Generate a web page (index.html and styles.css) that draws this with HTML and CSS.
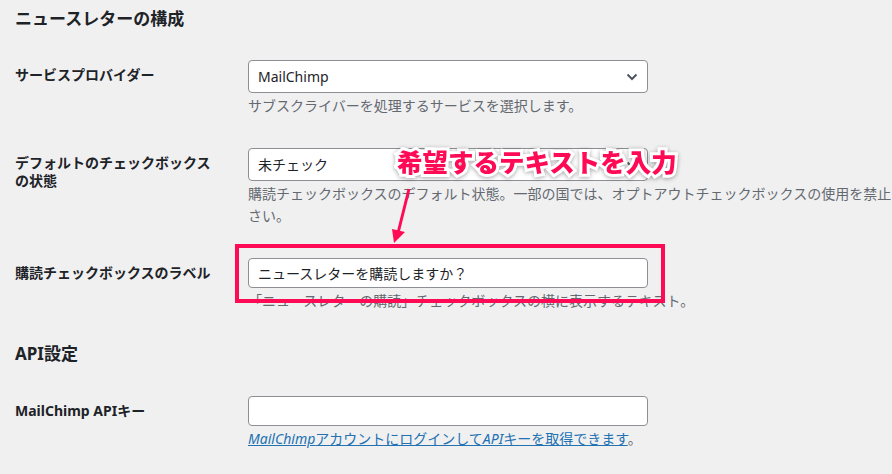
FILE: index.html
```html
<!DOCTYPE html>
<html lang="ja">
<head>
	<meta charset="UTF-8" />
	<meta name="viewport" content="width=device-width, initial-scale=1.0" />
	<title>ニュースレターの構成</title>
	<link rel="stylesheet" href="styles.css">
</head>
<body>
<div class="page">
	<h2>ニュースレターの構成</h2>

	<div class="row">
		<label class="label">サービスプロバイダー</label>
		<div class="field">
			<div class="select">
				<span>MailChimp</span>
				<svg width="12" height="8" viewBox="0 0 12 8"><path d="M1.5 1.5 6 6l4.5-4.5" fill="none" stroke="#50575e" stroke-width="2"/></svg>
			</div>
			<p class="desc">サブスクライバーを処理するサービスを選択します。</p>
		</div>
	</div>

	<div class="row">
		<label class="label">デフォルトのチェックボックス<br>の状態</label>
		<div class="field">
			<div class="select">
				<span>未チェック</span>
				<svg width="12" height="8" viewBox="0 0 12 8"><path d="M1.5 1.5 6 6l4.5-4.5" fill="none" stroke="#50575e" stroke-width="2"/></svg>
			</div>
			<p class="desc nowrap">購読チェックボックスのデフォルト状態。一部の国では、オプトアウトチェックボックスの使用を禁止<br>さい。</p>
		</div>
	</div>

	<div class="row">
		<label class="label">購読チェックボックスのラベル</label>
		<div class="field">
			<div class="highlight-wrap">
				<input class="input" type="text" value="ニュースレターを購読しますか？">
				<div class="highlight"></div>
			</div>
			<p class="desc">「ニュースレターの購読」チェックボックスの横に表示するテキスト。</p>
		</div>
	</div>

	<h2 class="second">API設定</h2>

	<div class="row">
		<label class="label">MailChimp APIキー</label>
		<div class="field">
			<input class="input" type="text" value="">
			<p class="desc"><a href="#"><i>MailChimp</i>アカウントにログインして<i>API</i>キーを取得できます</a>。</p>
		</div>
	</div>

	<div class="note">希望するテキストを入力</div>
	<svg class="arrow" width="30" height="64" viewBox="0 0 30 64">
		<line x1="21" y1="4" x2="10" y2="48" stroke="#fe0a55" stroke-width="3"/>
		<polygon points="4,44 17,47 6,58" fill="#fe0a55"/>
	</svg>
</div>
</body>
</html>
```

FILE: styles.css
```css
* {
	box-sizing: border-box;
	margin: 0;
	padding: 0;
}
html, body {
	width: 100%;
	height: 100%;
	overflow: hidden;
}
body {
	background: #f0f0f1;
	color: #1d2327;
	font-family: "Noto Sans", "Noto Sans CJK JP", sans-serif;
	font-size: 14px;
}
.page {
	position: relative;
	padding-left: 15px;
}
h2 {
	font-size: 17px;
	font-weight: 700;
	line-height: 22px;
	margin-top: 8px;
	margin-bottom: 14px;
}
h2.second {
	margin-top: 16px;
	margin-bottom: 15px;
}
.row {
	display: flex;
	padding: 16px 0 15px;
}
.label {
	width: 233px;
	flex: none;
	font-weight: 700;
	line-height: 18px;
	padding-top: 6px;
}
.field {
	flex: none;
}
.select {
	width: 400px;
	height: 33px;
	background: #fff;
	border: 1px solid #8c8f94;
	border-radius: 4px;
	display: flex;
	align-items: center;
	justify-content: space-between;
	padding: 0 9px 0 9px;
	line-height: 20px;
}
.input {
	display: block;
	width: 400px;
	height: 30px;
	background: #fff;
	border: 1px solid #8c8f94;
	border-radius: 4px;
	padding: 0 9px;
	font: inherit;
	color: #1d2327;
}
.desc {
	color: #646970;
	line-height: 22px;
	margin-top: 2px;
}
.desc.nowrap {
	white-space: nowrap;
}
.desc a {
	color: #2271b1;
}
.highlight-wrap {
	position: relative;
	width: 400px;
}
.highlight {
	position: absolute;
	left: -13px;
	top: -14px;
	right: -17px;
	bottom: -15px;
	border: 4px solid #fe0a55;
}
.note {
	position: absolute;
	left: 397px;
	top: 138px;
	font-family: "Noto Sans CJK JP", sans-serif;
	font-size: 25.5px;
	font-weight: 900;
	line-height: 30px;
	color: #fe0a55;
	-webkit-text-stroke: 6px #fff;
	paint-order: stroke fill;
	filter: drop-shadow(0 1px 2px rgba(0, 0, 0, 0.35));
}
.arrow {
	position: absolute;
	left: 388px;
	top: 177px;
}
```
